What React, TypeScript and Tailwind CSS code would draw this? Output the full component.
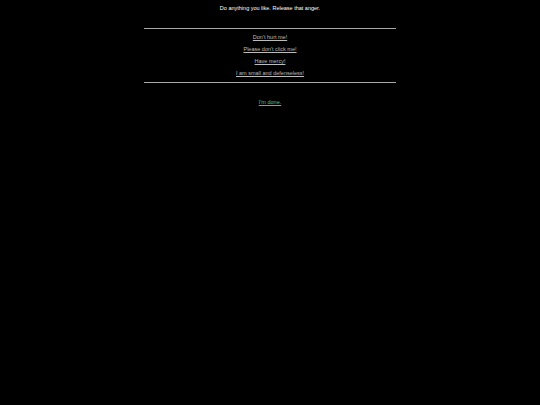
const LINKS = ["Don't hurt me!", "Please don't click me!", "Have mercy!", "I am small and defenseless!"];

export default function App() {
  return (
    <div className="min-h-screen bg-black pt-[2px] text-center font-['Liberation_Sans',Arial,sans-serif] text-[5.5px]">
      <p className="leading-[13px] text-white">Do anything you like. Release that anger.</p>

      <hr className="mx-auto mt-[13px] w-[252px] border-t border-[#a8a8a8]" />

      <ul className="mt-[2px]">
        {LINKS.map((label) => (
          <li key={label} className="leading-[12px]">
            <a href="#" className="text-[#bcbcbc] underline underline-offset-[1px]">
              {label}
            </a>
          </li>
        ))}
      </ul>

      <hr className="mx-auto mt-[3px] w-[252px] border-t border-[#a8a8a8]" />

      <p className="mt-[13px] leading-[12px]">
        <a href="#" className="text-[#3fc98c] underline underline-offset-[1px]">
          I'm done.
        </a>
      </p>
    </div>
  );
}
